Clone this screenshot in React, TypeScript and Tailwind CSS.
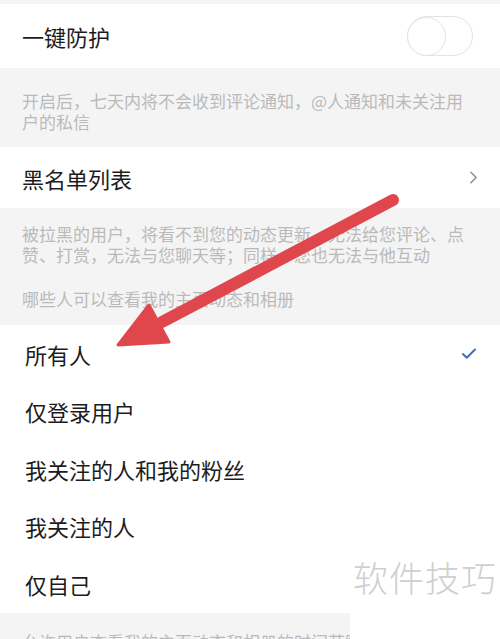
import { Check, ChevronRight } from 'lucide-react';

const options = ['所有人', '仅登录用户', '我关注的人和我的粉丝', '我关注的人', '仅自己'];

export default function App() {
  return (
    <div className="relative w-[500px] h-[639px] overflow-hidden bg-[#f4f4f4] font-['Noto_Sans_CJK_SC',sans-serif]">
      <div className="h-[4px]" />

      {/* 一键防护 */}
      <div className="h-[64px] bg-white flex items-center justify-between pl-[22px] pr-[27px]">
        <span className="text-[22px] leading-none text-[#1c1c1c]">一键防护</span>
        <div className="w-[66px] h-[40px] rounded-full border-[1.5px] border-[#e3e3e3] bg-white flex items-center">
          <div className="w-[39px] h-[39px] -ml-[1.5px] rounded-full border-[1.5px] border-[#e3e3e3] bg-white" />
        </div>
      </div>
      <div className="pl-[22px] pr-[22px] pt-[22px] pb-[15px] text-[17px] leading-[21px] text-[#bababa]">
        开启后，七天内将不会收到评论通知，@人通知和未关注用户的私信
      </div>

      {/* 黑名单 */}
      <div className="h-[61px] bg-white flex items-center justify-between pl-[22px] pr-[16px]">
        <span className="text-[22px] leading-none text-[#1c1c1c]">黑名单列表</span>
        <ChevronRight size={21} strokeWidth={1.8} className="text-[#8e8e8e]" />
      </div>
      <div className="pl-[22px] pr-[22px] pt-[15px] text-[17px] leading-[21px] text-[#bababa]">
        被拉黑的用户，将看不到您的动态更新，无法给您评论、点赞、打赏，无法与您聊天等；同样，您也无法与他互动
      </div>
      <div className="pl-[22px] pt-[23px] pb-[16px] text-[17px] leading-[21px] text-[#bababa]">
        哪些人可以查看我的主页动态和相册
      </div>

      {/* 可见范围 */}
      <div className="bg-white">
        {options.map((label, i) => (
          <div key={label} className="h-[57.5px] flex items-center justify-between pl-[25px] pr-[22px]">
            <span className="text-[22px] leading-none text-[#1c1c1c]">{label}</span>
            {i === 0 && <Check size={18} strokeWidth={2.6} className="text-[#3f6fb3]" />}
          </div>
        ))}
      </div>
      <div className="pl-[22px] pt-[18px] text-[17px] leading-[21px] text-[#bababa]">
        允许用户查看我的主页动态和相册的时间范围
      </div>

      {/* watermark */}
      <div className="absolute right-0 bottom-0 w-[150px] h-[92px] bg-white flex items-start justify-center pt-[6px]">
        <span className="text-[35px] leading-[48px] tracking-[1px] text-[#cfcfcf] font-light">软件技巧</span>
      </div>

      {/* red arrow */}
      <svg className="absolute inset-0 pointer-events-none" width="500" height="639" viewBox="0 0 500 639">
        <line x1="393" y1="200" x2="162" y2="322" stroke="#df474d" strokeWidth="12" strokeLinecap="round" />
        <polygon points="118,345 149,305 169,342" fill="#df474d" stroke="#df474d" strokeWidth="3" strokeLinejoin="round" />
      </svg>
    </div>
  );
}
